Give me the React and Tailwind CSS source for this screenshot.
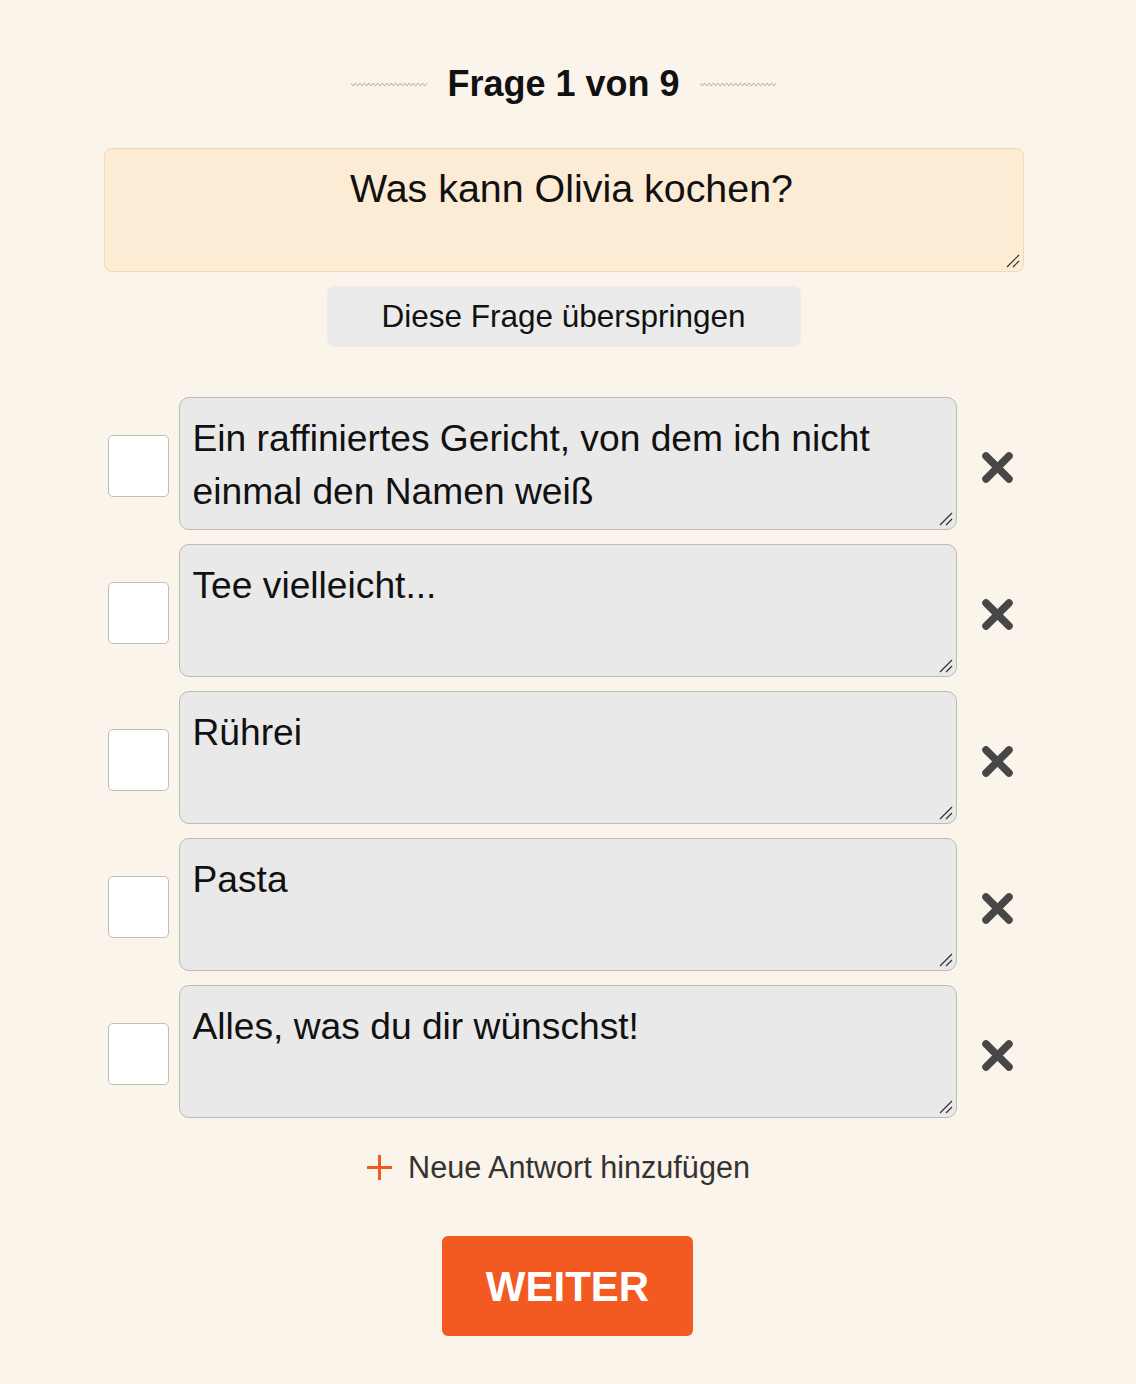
import React from "react";

function Wave() {
  const pts = [];
  for (let i = 0; i <= 34; i++) {
    pts.push(`${(i * 76) / 34},${i % 2 === 0 ? 1 : 4}`);
  }
  return (
    <svg width="76" height="5" viewBox="0 0 76 5" className="shrink-0">
      <polyline points={pts.join(" ")} fill="none" stroke="#b3b0ab" strokeWidth="1" />
    </svg>
  );
}

function XIcon() {
  return (
    <svg width="31" height="31" viewBox="0 0 31 31" className="shrink-0">
      <line x1="4" y1="4" x2="27" y2="27" stroke="#474747" strokeWidth="7.5" strokeLinecap="round" />
      <line x1="27" y1="4" x2="4" y2="27" stroke="#474747" strokeWidth="7.5" strokeLinecap="round" />
    </svg>
  );
}

function Grip() {
  return (
    <svg width="14" height="14" viewBox="0 0 14 14" className="absolute right-[4px] bottom-[4px] pointer-events-none">
      <line x1="1" y1="13" x2="13" y2="1" stroke="#333" strokeWidth="1.2" />
      <line x1="7" y1="13" x2="13" y2="7" stroke="#333" strokeWidth="1.2" />
    </svg>
  );
}

const answers = [
  "Ein raffiniertes Gericht, von dem ich nicht einmal den Namen weiß",
  "Tee vielleicht...",
  "Rührei",
  "Pasta",
  "Alles, was du dir wünschst!",
];

export default function App() {
  return (
    <div className="min-h-[1384px] bg-[#fbf4ea] font-['Liberation_Sans',Arial,sans-serif] flex flex-col items-center pt-[62px] pr-[9px] text-[#111]">
      <div className="flex items-center gap-5 h-[44px]">
        <Wave />
        <h1 className="text-[36px] leading-[44px] font-bold text-[#111]">Frage 1 von 9</h1>
        <Wave />
      </div>

      <div className="relative mt-[42px] w-[920px] h-[124px]">
        <textarea
          defaultValue="Was kann Olivia kochen?"
          className="block w-full h-full resize-none bg-[#fdecd5] border border-[#f6d7ae] rounded-[8px] text-center text-[39.4px] leading-[48px] pt-[15px] pl-[32px] pr-[16px] text-[#111] outline-none"
        />
        <Grip />
      </div>

      <button className="mt-[14px] w-[474px] h-[61px] bg-[#ebebeb] rounded-[8px] text-[31.5px] text-[#111]">
        Diese Frage überspringen
      </button>

      <div className="mt-[50px] w-[920px] flex flex-col gap-[14px]">
        {answers.map((a, i) => (
          <div key={i} className="flex items-center">
            <div className="ml-[4px] mt-[5px] w-[61px] h-[62px] bg-white border border-[#bdbdbd] rounded-[5px] shrink-0" />
            <div className="relative ml-[10px] w-[778px] h-[133px] shrink-0">
              <textarea
                defaultValue={a}
                className="block w-full h-full resize-none bg-[#e9e9e9] border border-[#bababa] rounded-[10px] text-[37.2px] leading-[53px] pt-[14px] pl-[13px] pr-[13px] text-[#111] outline-none"
              />
              <Grip />
            </div>
            <div className="ml-[25px] mt-[8px]">
              <XIcon />
            </div>
          </div>
        ))}
      </div>

      <button className="mt-[31px] mr-[10px] flex items-center gap-4 h-[36px] text-[30.6px] leading-[36px] text-[#333]">
        <svg width="25" height="25" viewBox="0 0 25 25" className="shrink-0">
          <line x1="12.5" y1="0" x2="12.5" y2="25" stroke="#ee5a24" strokeWidth="3" />
          <line x1="0" y1="12.5" x2="25" y2="12.5" stroke="#ee5a24" strokeWidth="3" />
        </svg>
        <span>Neue Antwort hinzufügen</span>
      </button>

      <button className="mt-[51px] ml-[8px] w-[251px] h-[100px] bg-[#f25a22] rounded-[6px] text-white text-[42px] font-bold">
        WEITER
      </button>
    </div>
  );
}
